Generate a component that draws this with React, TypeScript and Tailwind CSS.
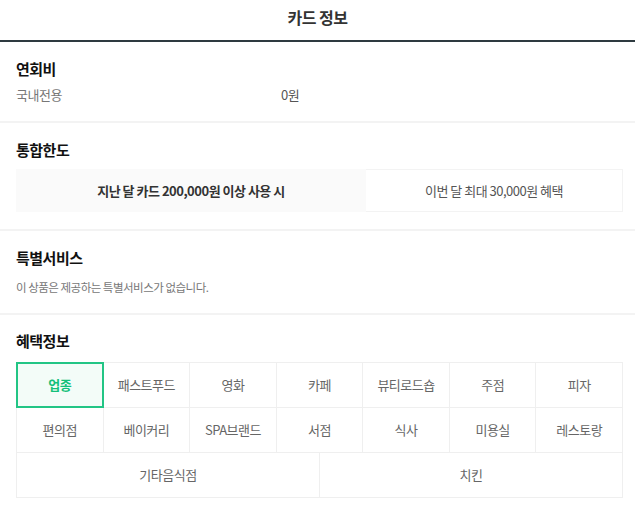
const font = { fontFamily: '"Noto Sans CJK KR", "Noto Sans", sans-serif' }

const categoriesTop = ['업종', '패스트푸드', '영화', '카페', '뷰티로드숍', '주점', '피자']
const categoriesMid = ['편의점', '베이커리', 'SPA브랜드', '서점', '식사', '미용실', '레스토랑']
const categoriesBottom = ['기타음식점', '치킨']

function SectionTitle({ children }: { children: React.ReactNode }) {
  return <h3 className="text-[15px] leading-5 font-bold text-[#111] tracking-[-0.5px]">{children}</h3>
}

function Cell({ label, active }: { label: string; active?: boolean }) {
  return (
    <div
      className={`relative flex h-[45px] items-center justify-center border-r border-b border-[#efefef] text-[13px] tracking-[-0.5px] ${
        active ? 'bg-[#f3fcf8] font-bold text-[#14c07a]' : 'text-[#666]'
      }`}
    >
      {active && <span className="absolute -top-px -left-px -right-px -bottom-px border-2 border-[#22c585]" />}
      <span className="relative">{label}</span>
    </div>
  )
}

export default function App() {
  return (
    <div className="w-[635px] bg-white" style={font}>
      {/* Header */}
      <div className="flex h-[42px] items-center justify-center border-b-2 border-[#2e3a40] pb-[7px]">
        <h1 className="text-[16px] font-bold text-[#333] tracking-[-0.5px]">카드 정보</h1>
      </div>

      {/* 연회비 */}
      <section className="border-b-2 border-[#f3f3f3] pl-4 pr-3 pt-[17px] pb-[17px]">
        <SectionTitle>연회비</SectionTitle>
        <div className="mt-[7px] flex text-[13px] leading-[18px] tracking-[-0.5px]">
          <span className="w-[265px] text-[#777]">국내전용</span>
          <span className="text-[#555]">0원</span>
        </div>
      </section>

      {/* 통합한도 */}
      <section className="border-b-2 border-[#f3f3f3] pl-4 pr-3 pt-[17px] pb-[17px]">
        <SectionTitle>통합한도</SectionTitle>
        <div className="mt-[9px] flex h-[43px] text-[13px] tracking-[-0.5px]">
          <div className="flex w-[350px] items-center justify-center bg-[#fafafa] font-bold text-[#333]">
            지난 달 카드 200,000원 이상 사용 시
          </div>
          <div className="flex flex-1 items-center justify-center border border-l-0 border-[#f3f3f3] text-[#555]">
            이번 달 최대 30,000원 혜택
          </div>
        </div>
      </section>

      {/* 특별서비스 */}
      <section className="border-b-2 border-[#f3f3f3] pl-4 pr-3 pt-[17px] pb-[17px]">
        <SectionTitle>특별서비스</SectionTitle>
        <p className="mt-[10px] text-[11.5px] leading-[18px] text-[#777] tracking-[-0.5px]">
          이 상품은 제공하는 특별서비스가 없습니다.
        </p>
      </section>

      {/* 혜택정보 */}
      <section className="pl-4 pr-3 pt-[16px] pb-[12px]">
        <SectionTitle>혜택정보</SectionTitle>
        <div className="mt-[11px] border-t border-l border-[#efefef]">
          <div className="grid grid-cols-7">
            {categoriesTop.map((c, i) => (
              <Cell key={c} label={c} active={i === 0} />
            ))}
          </div>
          <div className="grid grid-cols-7">
            {categoriesMid.map(c => (
              <Cell key={c} label={c} />
            ))}
          </div>
          <div className="grid grid-cols-2">
            {categoriesBottom.map(c => (
              <Cell key={c} label={c} />
            ))}
          </div>
        </div>
      </section>
    </div>
  )
}
